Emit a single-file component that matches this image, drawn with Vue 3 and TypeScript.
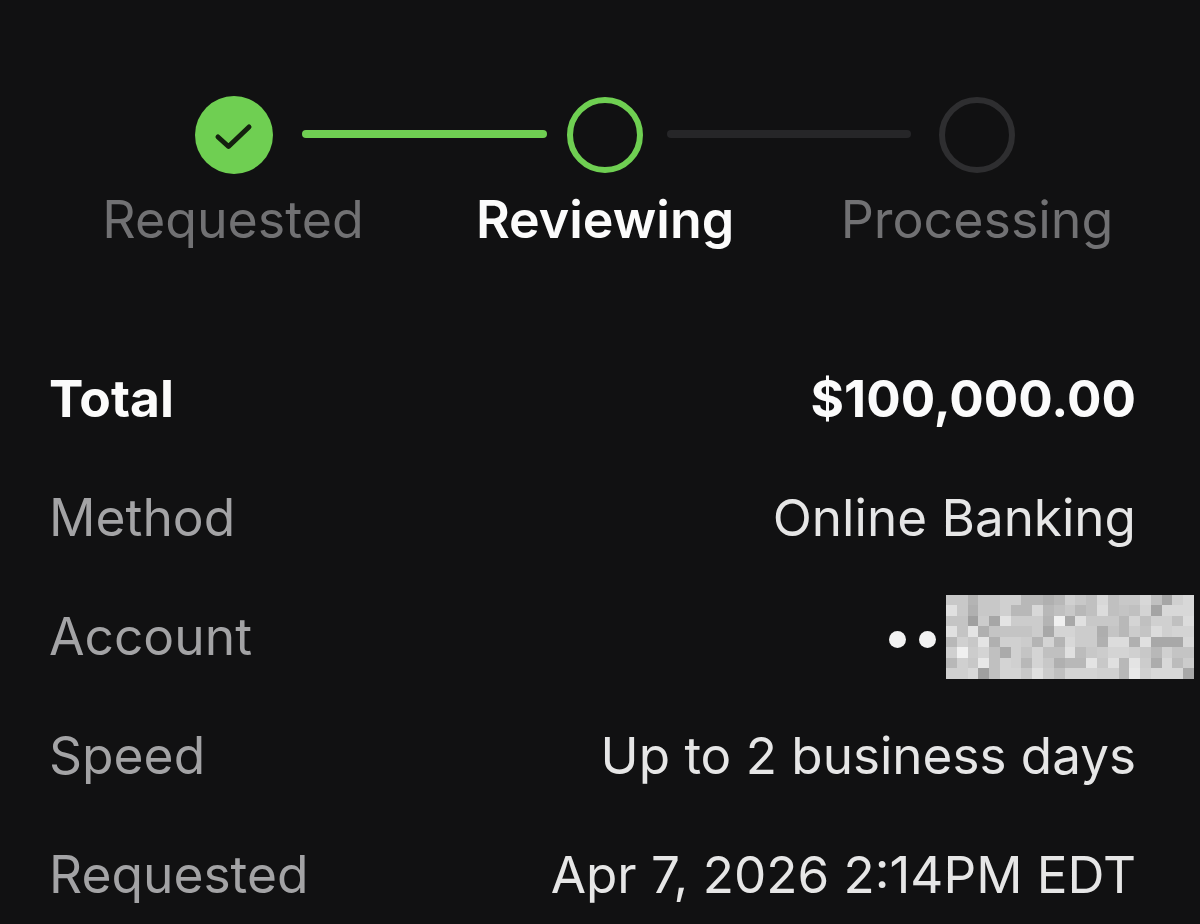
<script setup lang="ts">
const steps = [
  { label: 'Requested', state: 'done' },
  { label: 'Reviewing', state: 'active' },
  { label: 'Processing', state: 'todo' },
]
const rows = [
  { key: 'Method', value: 'Online Banking' },
  { key: 'Account', value: '', masked: true },
  { key: 'Speed', value: 'Up to 2 business days' },
  { key: 'Requested', value: 'Apr 7, 2026 2:14PM EDT' },
]
const mosaic: string[] = [
  'c8 c8 b4 c8 c8 d0 d0 b8 b8 b0 b8 d0 c8 c0 d8 c0 c8 c8 d8 c0 a6 d0 d8',
  'e0 c8 b0 c8 c8 d0 b8 b8 d8 b8 c0 c8 b8 c0 dc c0 c4 c0 d4 a4 d8 d8 d8',
  'c4 c4 a0 cc a6 e4 cc cc cc b4 f0 a8 e0 c8 c8 c8 b8 d4 c0 d0 d0 c0 dc',
  'e0 c4 e4 b0 c4 c4 c4 c4 cc a8 d4 d4 cc cc ae c4 b8 cc c4 dc d0 d4 d4',
  'b8 d0 c8 e4 b0 d0 d0 cc b4 d4 b4 d8 cc cc b0 dc dc b0 e0 a8 a8 a8 d8',
  'd0 f0 cc d4 c0 aa d0 c4 d4 c0 c0 e0 bc c8 cc d4 d4 d0 c8 b8 d0 c4 c4',
  'b8 d0 c8 e8 c0 d4 d0 b8 d4 c8 b0 b8 b8 e4 c8 e0 b8 e4 cc ac d8 bc cc',
  'd0 d0 d8 a0 c0 d4 d4 c8 e0 cc c0 d4 d4 d4 d0 d0 b8 e8 d0 d8 d8 d8 a8',
]
const cells = mosaic.flatMap((r) => r.split(' ').map((h) => `#${h}${h}${h}`))
</script>

<template>
  <main class="screen">
    <section class="stepper">
      <div class="track">
        <span class="node done">
          <svg width="44" height="44" viewBox="0 0 44 44" fill="none">
            <path d="M6 24 L16.5 33.5 L37 14" stroke="#14200f" stroke-width="5" stroke-linecap="round" stroke-linejoin="round" />
          </svg>
        </span>
        <span class="line on"></span>
        <span class="node active"></span>
        <span class="line off"></span>
        <span class="node todo"></span>
      </div>
      <div class="labels">
        <span v-for="s in steps" :key="s.label" class="label" :class="s.state">{{ s.label }}</span>
      </div>
    </section>

    <section class="details">
      <div class="row total">
        <span>Total</span>
        <span class="amount">$100,000.00</span>
      </div>
      <div v-for="r in rows" :key="r.key" class="row">
        <span class="key">{{ r.key }}</span>
        <span v-if="!r.masked" class="value">{{ r.value }}</span>
        <span v-else class="masked">
          <i class="dot"></i>
          <i class="dot"></i>
          <span class="mosaic">
            <b v-for="(c, i) in cells" :key="i" :style="{ background: c }"></b>
          </span>
        </span>
      </div>
    </section>
  </main>
</template>

<style scoped>
.screen {
  width: 1200px;
  height: 924px;
  overflow: hidden;
  box-sizing: border-box;
  background: #111112;
  padding-top: 96px;
  font-family: Inter, "Liberation Sans", sans-serif;
  filter: blur(0.5px);
}
.track {
  display: flex;
  align-items: center;
  padding-left: 195px;
  height: 78px;
}
.node {
  box-sizing: border-box;
  border-radius: 50%;
  flex: none;
  width: 76px;
  height: 76px;
  display: flex;
  align-items: center;
  justify-content: center;
}
.node.done {
  width: 78px;
  height: 78px;
  background: #6fcf52;
}
.node.active {
  border: 6px solid #6fcf52;
}
.node.todo {
  border: 6px solid #2e2e30;
}
.line {
  height: 8px;
  border-radius: 4px;
  flex: none;
  margin-bottom: 3px;
}
.line.on {
  width: 245px;
  margin-left: 29px;
  margin-right: 20px;
  background: #6fcf52;
}
.line.off {
  width: 244px;
  margin-left: 24px;
  margin-right: 28px;
  background: #262628;
}
.labels {
  display: grid;
  grid-template-columns: repeat(3, 372px);
  padding-left: 47px;
  margin-top: 16px;
}
.label {
  text-align: center;
  font-size: 51.9px;
  line-height: 60px;
  color: #717173;
}
.label.active {
  color: #fbfbfb;
  font-weight: 600;
}
.details {
  margin-top: 88px;
  padding: 0 64px 0 49px;
}
.row {
  display: flex;
  justify-content: space-between;
  align-items: center;
  height: 119px;
  font-size: 51.5px;
}
.row.total {
  color: #fbfbfb;
  font-weight: 700;
}
.amount {
  font-size: 51.2px;
}
.key {
  color: #a3a3a5;
}
.value {
  color: #e6e6e6;
  font-size: 51.2px;
}
.masked {
  display: flex;
  align-items: center;
  margin-right: -58px;
}
.dot {
  width: 17px;
  height: 17px;
  border-radius: 50%;
  background: #f2f2f2;
  margin-top: 8px;
  margin-right: 13px;
}
.dot + .dot {
  margin-right: 10px;
}
.mosaic {
  display: grid;
  grid-template-columns: repeat(23, 1fr);
  grid-template-rows: repeat(8, 1fr);
  width: 248px;
  height: 84px;
  margin-top: 2px;
}
</style>
